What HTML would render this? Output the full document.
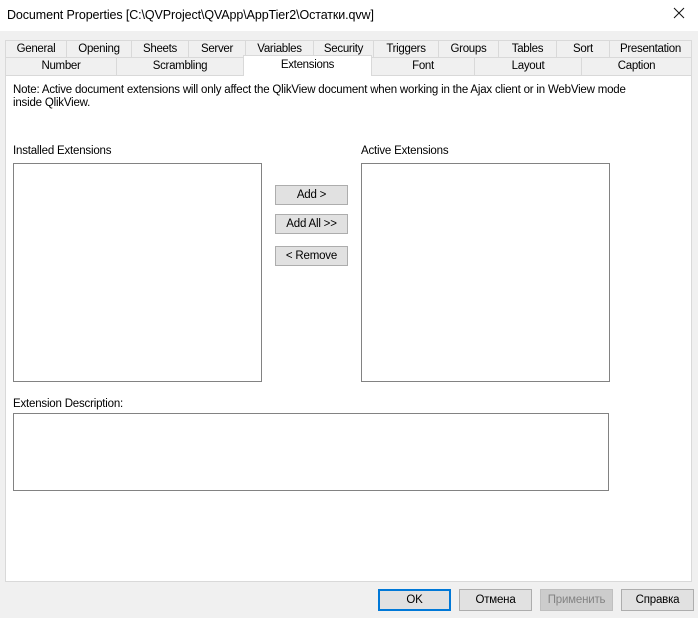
<!DOCTYPE html><html><head><style>
body{margin:0;width:698px;height:618px;background:#f0f0f0;font-family:"Liberation Sans","DejaVu Sans",sans-serif;font-size:11.5px;color:#000;position:relative;overflow:hidden}
.a{position:absolute;box-sizing:border-box}
.t{background:#f0f0f0;border:1px solid #d9d9d9;text-align:center;line-height:17px;letter-spacing:-0.3px}
.box{background:#fff;border:1px solid #828282}
.b{background:#e1e1e1;border:1px solid #adadad;text-align:center;line-height:19px;letter-spacing:-0.2px}
</style></head><body>
<div class="a" style="left:0;top:0;width:698px;height:31px;background:#fff"></div>
<div class="a" style="left:7px;top:8px;font-size:12.5px;letter-spacing:-0.1px">Document Properties [C:\QVProject\QVApp\AppTier2\Остатки.qvw]</div>
<svg class="a" style="left:673px;top:7px" width="12" height="12"><path d="M1 1L11 11M11 1L1 11" stroke="#111" stroke-width="1"/></svg>
<div class="a" style="left:5px;top:75px;width:687px;height:507px;background:#fff;border:1px solid #d9d9d9"></div>
<div class="a t" style="left:5px;top:40px;width:62px;height:18px">General</div>
<div class="a t" style="left:66px;top:40px;width:66px;height:18px">Opening</div>
<div class="a t" style="left:131px;top:40px;width:58px;height:18px">Sheets</div>
<div class="a t" style="left:188px;top:40px;width:58px;height:18px">Server</div>
<div class="a t" style="left:245px;top:40px;width:69px;height:18px">Variables</div>
<div class="a t" style="left:313px;top:40px;width:61px;height:18px">Security</div>
<div class="a t" style="left:373px;top:40px;width:66px;height:18px">Triggers</div>
<div class="a t" style="left:438px;top:40px;width:61px;height:18px">Groups</div>
<div class="a t" style="left:498px;top:40px;width:59px;height:18px">Tables</div>
<div class="a t" style="left:556px;top:40px;width:54px;height:18px">Sort</div>
<div class="a t" style="left:609px;top:40px;width:83px;height:18px">Presentation</div>
<div class="a t" style="left:5px;top:57px;width:112px;height:19px">Number</div>
<div class="a t" style="left:116px;top:57px;width:128px;height:19px">Scrambling</div>
<div class="a t" style="left:371px;top:57px;width:104px;height:19px">Font</div>
<div class="a t" style="left:474px;top:57px;width:108px;height:19px">Layout</div>
<div class="a t" style="left:581px;top:57px;width:111px;height:19px">Caption</div>
<div class="a t" style="left:243px;top:55px;width:129px;height:21px;background:#fff;border-bottom:none;line-height:18px">Extensions</div>
<div class="a" style="left:13px;top:84px;width:650px;line-height:13px;letter-spacing:-0.2px">Note: Active document extensions will only affect the QlikView document when working in the Ajax client or in WebView mode<br>inside QlikView.</div>
<div class="a" style="left:13px;top:145px;letter-spacing:-0.2px">Installed Extensions</div>
<div class="a" style="left:361px;top:145px;letter-spacing:-0.2px">Active Extensions</div>
<div class="a box" style="left:13px;top:163px;width:249px;height:219px"></div>
<div class="a box" style="left:361px;top:163px;width:249px;height:219px"></div>
<div class="a b" style="left:275px;top:185px;width:73px;height:20px">Add &gt;</div>
<div class="a b" style="left:275px;top:214px;width:73px;height:20px">Add All &gt;&gt;</div>
<div class="a b" style="left:275px;top:246px;width:73px;height:20px">&lt; Remove</div>
<div class="a" style="left:13px;top:398px;letter-spacing:-0.2px">Extension Description:</div>
<div class="a box" style="left:13px;top:413px;width:596px;height:78px"></div>
<div class="a b" style="left:378px;top:589px;width:73px;height:22px;border:2px solid #0078d7;line-height:19px">OK</div>
<div class="a b" style="left:459px;top:589px;width:73px;height:22px;line-height:21px">Отмена</div>
<div class="a b" style="left:540px;top:589px;width:73px;height:22px;line-height:21px;background:#ccc;border-color:#bfbfbf;color:#838383">Применить</div>
<div class="a b" style="left:621px;top:589px;width:73px;height:22px;line-height:21px">Справка</div>
</body></html>
